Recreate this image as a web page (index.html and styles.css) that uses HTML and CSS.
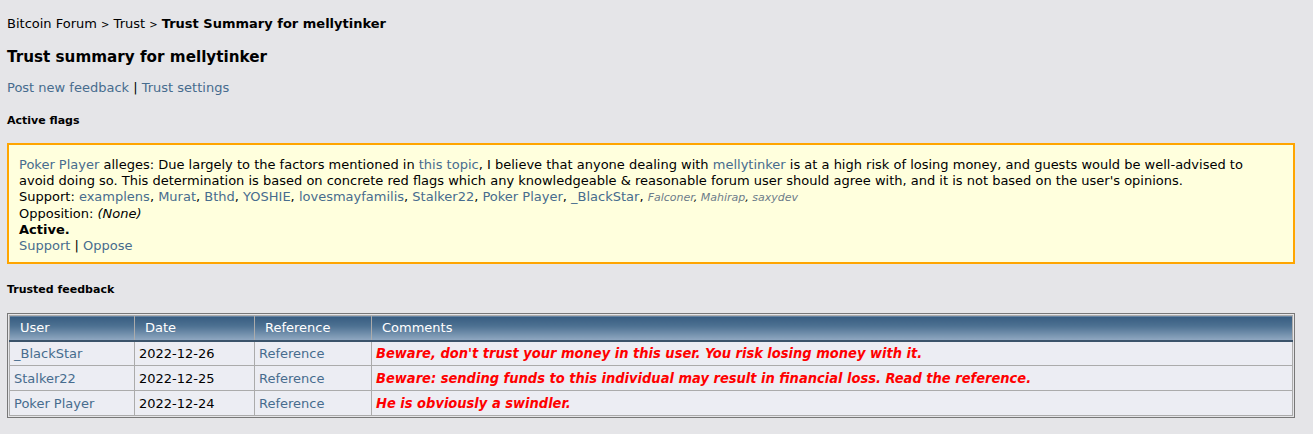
FILE: index.html
```html
<!DOCTYPE html>
<html lang="en">
<head>
    <meta charset="UTF-8">
    <title>Trust summary for mellytinker</title>
    <link rel="stylesheet" href="styles.css">
</head>
<body>
    <div class="page">
        <div class="nav">
            <a href="#">Bitcoin Forum</a> <span class="sep">&gt;</span> <a href="#">Trust</a> <span class="sep">&gt;</span> <b>Trust Summary for mellytinker</b>
        </div>

        <h1>Trust summary for mellytinker</h1>

        <div class="links">
            <a href="#">Post new feedback</a> | <a href="#">Trust settings</a>
        </div>

        <h3>Active flags</h3>

        <div class="flag">
            <a href="#">Poker Player</a> alleges: Due largely to the factors mentioned in <a href="#">this topic</a>, I believe that anyone dealing with <a href="#">mellytinker</a> is at a high risk of losing money, and guests would be well-advised to avoid doing so. This determination is based on concrete red flags which any knowledgeable &amp; reasonable forum user should agree with, and it is not based on the user's opinions.<br>
            Support: <a href="#">examplens</a>, <a href="#">Murat</a>, <a href="#">Bthd</a>, <a href="#">YOSHIE</a>, <a href="#">lovesmayfamilis</a>, <a href="#">Stalker22</a>, <a href="#">Poker Player</a>, <a href="#">_BlackStar</a>, <span class="untrusted"><a href="#">Falconer</a>, <a href="#">Mahirap</a>, <a href="#">saxydev</a></span><br>
            Opposition: <i>(None)</i><br>
            <b>Active.</b><br>
            <a href="#">Support</a> | <a href="#">Oppose</a>
        </div>

        <h3 class="section">Trusted feedback</h3>

        <div class="tborder">
            <table class="feedback">
                <tr>
                    <th class="col-user">User</th>
                    <th class="col-date">Date</th>
                    <th class="col-ref">Reference</th>
                    <th>Comments</th>
                </tr>
                <tr>
                    <td><a href="#">_BlackStar</a></td>
                    <td>2022-12-26</td>
                    <td><a href="#">Reference</a></td>
                    <td class="comment">Beware, don't trust your money in this user. You risk losing money with it.</td>
                </tr>
                <tr>
                    <td><a href="#">Stalker22</a></td>
                    <td>2022-12-25</td>
                    <td><a href="#">Reference</a></td>
                    <td class="comment">Beware: sending funds to this individual may result in financial loss. Read the reference.</td>
                </tr>
                <tr>
                    <td><a href="#">Poker Player</a></td>
                    <td>2022-12-24</td>
                    <td><a href="#">Reference</a></td>
                    <td class="comment">He is obviously a swindler.</td>
                </tr>
            </table>
        </div>
    </div>
</body>
</html>
```

FILE: styles.css
```css
:root {
    --bg: #E5E5E8;
    --link: #476C8E;
    --text: #000000;
    --row: #ECEDF3;
    --line: #ABABAB;
}

* {
    box-sizing: border-box;
}

body {
    margin: 0;
    background-color: var(--bg);
    font-family: 'DejaVu Sans', Verdana, sans-serif;
    font-size: 13px;
    color: var(--text);
}

a {
    color: var(--link);
    text-decoration: none;
}

.page {
    padding: 16px 18px 0 7px;
}

.nav {
    line-height: 16px;
}

.nav a {
    color: var(--text);
}

.nav .sep {
    font-size: 10px;
}

h1 {
    font-size: 15.2px;
    margin: 14px 0 0;
    line-height: 20px;
}

.links {
    margin-top: 13px;
    line-height: 16px;
}

h3 {
    font-size: 11px;
    margin: 18px 0 0;
    line-height: 14px;
}

.flag {
    margin-top: 15px;
    border: 2px solid #FFA500;
    background-color: #FFFFDD;
    padding: 12px 14px 8px 10px;
    line-height: 16px;
}

.untrusted {
    font-size: 11px;
    font-style: italic;
}

.untrusted a {
    color: #6D7C8A;
}

h3.section {
    margin-top: 19px;
}

.tborder {
    margin-top: 16px;
    border: 1px solid #777777;
    padding: 1px;
    background-color: var(--bg);
}

.feedback {
    width: 100%;
    border-collapse: collapse;
}

.feedback th,
.feedback td {
    height: 25px;
    padding: 0 4px;
    text-align: left;
    border: 1px solid var(--line);
}

.feedback th {
    font-weight: normal;
    color: #FFFFFF;
    padding-left: 10px;
    background: linear-gradient(to bottom, #375C80, #4D7192 40%, #91A9C2);
    border-color: var(--line) var(--line) #3B536A var(--line);
    border-bottom-width: 2px;
}

.feedback td {
    background-color: var(--row);
}

.col-user {
    width: 125px;
}

.col-date {
    width: 120px;
}

.col-ref {
    width: 117px;
}

.comment {
    color: #FF0000;
    font-weight: bold;
    font-style: italic;
    font-size: 14.5px;
    font-family: 'Liberation Sans Narrow', 'DejaVu Sans Condensed', sans-serif;
}
```
